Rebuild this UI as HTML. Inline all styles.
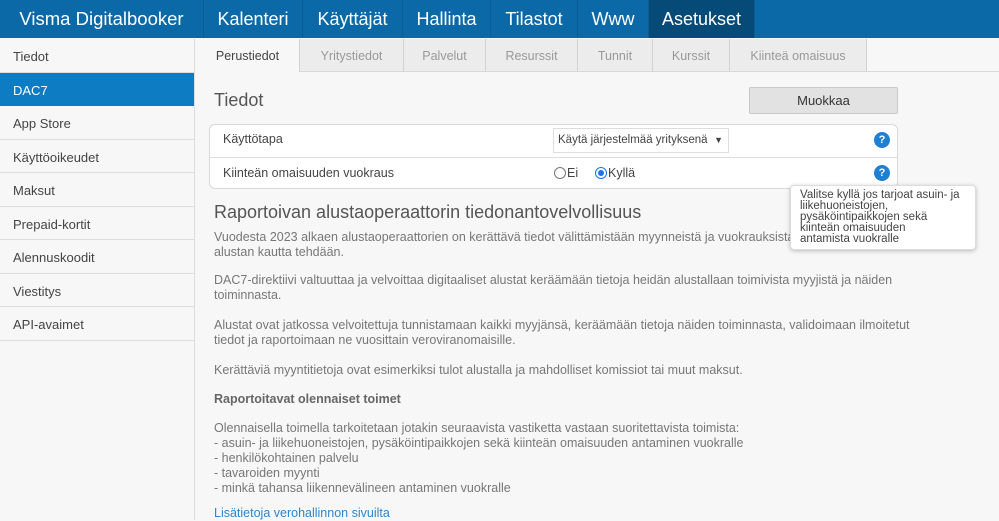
<!DOCTYPE html><html><head><meta charset="utf-8"><style>
*{margin:0;padding:0;box-sizing:border-box}
body{width:999px;height:520px;overflow:hidden;background:#f7f7f7;font-family:"Liberation Sans",sans-serif;position:relative}
.top{position:absolute;left:0;top:0;width:999px;height:38px;background:#0b69a8}
.top div{position:absolute;top:0;height:38px;line-height:38px;color:#fff;font-size:18px;text-align:center;border-right:1px solid #0a5d95}
.side{position:absolute;left:0;top:39px;width:195px;height:481px;background:#f7f7f7;border-right:1px solid #ddd}
.side div{height:33.5px;line-height:35px;padding-left:13px;font-size:13px;color:#444;border-bottom:1px solid #ddd}
.side .act{background:#0e7cc3;color:#fff;border-bottom:none}
.tab{position:absolute;top:39px;height:33px;line-height:34px;text-align:center;font-size:12.5px;color:#999;background:#ececec;border-right:1px solid #d2d2d2;border-bottom:1px solid #d8d8d8}
.tab.a{background:#f7f7f7;color:#444;border-bottom:none}
.t{position:absolute;font-size:12.5px;color:#777;line-height:15px}
.q{position:absolute;width:16px;height:16px;border-radius:50%;background:#1f7fd1;color:#fff;font-weight:bold;font-size:11px;text-align:center;line-height:16px}
</style></head><body>
<div class="top">
<div style="left:0;width:204px;font-size:18.5px">Visma Digitalbooker</div>
<div style="left:204px;width:99px">Kalenteri</div>
<div style="left:303px;width:100px">Käyttäjät</div>
<div style="left:403px;width:88px">Hallinta</div>
<div style="left:491px;width:87px">Tilastot</div>
<div style="left:578px;width:71px">Www</div>
<div style="left:649px;width:106px;background:#064a77">Asetukset</div>
</div>
<div class="side">
<div>Tiedot</div><div class="act">DAC7</div><div>App Store</div><div>Käyttöoikeudet</div><div>Maksut</div><div>Prepaid-kortit</div><div>Alennuskoodit</div><div>Viestitys</div><div>API-avaimet</div>
</div>
<div class="tab a" style="left:196px;width:104px">Perustiedot</div>
<div class="tab" style="left:300px;width:104px">Yritystiedot</div>
<div class="tab" style="left:404px;width:82px">Palvelut</div>
<div class="tab" style="left:486px;width:92px">Resurssit</div>
<div class="tab" style="left:578px;width:75px">Tunnit</div>
<div class="tab" style="left:653px;width:77px">Kurssit</div>
<div class="tab" style="left:730px;width:137px">Kiinteä omaisuus</div>
<div style="position:absolute;left:867px;top:71px;width:132px;border-top:1px solid #d8d8d8"></div>
<div style="position:absolute;left:214px;top:90px;font-size:18px;color:#555">Tiedot</div>
<div style="position:absolute;left:749px;top:87px;width:149px;height:27px;background:#e2e2e2;border:1px solid #c8c8c8;border-radius:2px;text-align:center;line-height:25px;font-size:13px;color:#333">Muokkaa</div>
<div style="position:absolute;left:209px;top:124px;width:689px;height:65px;background:#fff;border:1px solid #d8d8d8;border-radius:6px">
<div style="height:33px;border-bottom:1px solid #ddd"></div></div>
<div class="t" style="left:223px;top:132px;color:#444">Käyttötapa</div>
<div class="t" style="left:223px;top:166px;color:#444">Kiinteän omaisuuden vuokraus</div>
<div style="position:absolute;left:553px;top:128px;width:176px;height:25px;border:1px solid #ddd;background:#fff;font-size:11.5px;color:#444;line-height:23px;padding-left:4px">Käytä järjestelmää yrityksenä <span style="position:absolute;right:5px;top:0;font-size:9px">▼</span></div>
<div style="position:absolute;left:554px;top:167px;width:12px;height:12px;border:1px solid #777;border-radius:50%"></div>
<div class="t" style="left:567px;top:166px;color:#444">Ei</div>
<div style="position:absolute;left:595px;top:167px;width:12px;height:12px;border:1px solid #1a73e8;border-radius:50%;background:#fff"><div style="margin:2px;width:6px;height:6px;border-radius:50%;background:#1a73e8"></div></div>
<div class="t" style="left:608px;top:166px;color:#444">Kyllä</div>
<div class="q" style="left:874px;top:132px">?</div>
<div class="q" style="left:874px;top:165px">?</div>
<div style="position:absolute;left:214px;top:202px;font-size:18px;color:#555">Raportoivan alustaoperaattorin tiedonantovelvollisuus</div>
<div class="t" style="left:214px;top:230px">Vuodesta 2023 alkaen alustaoperaattorien on kerättävä tiedot välittämistään myynneistä ja vuokrauksista, joita<br>alustan kautta tehdään.</div>
<div class="t" style="left:214px;top:273px">DAC7-direktiivi valtuuttaa ja velvoittaa digitaaliset alustat keräämään tietoja heidän alustallaan toimivista myyjistä ja näiden<br>toiminnasta.</div>
<div class="t" style="left:214px;top:318px">Alustat ovat jatkossa velvoitettuja tunnistamaan kaikki myyjänsä, keräämään tietoja näiden toiminnasta, validoimaan ilmoitetut<br>tiedot ja raportoimaan ne vuosittain veroviranomaisille.</div>
<div class="t" style="left:214px;top:363px">Kerättäviä myyntitietoja ovat esimerkiksi tulot alustalla ja mahdolliset komissiot tai muut maksut.</div>
<div class="t" style="left:214px;top:392px;font-weight:bold;color:#666">Raportoitavat olennaiset toimet</div>
<div class="t" style="left:214px;top:421px">Olennaisella toimella tarkoitetaan jotakin seuraavista vastiketta vastaan suoritettavista toimista:<br>- asuin- ja liikehuoneistojen, pysäköintipaikkojen sekä kiinteän omaisuuden antaminen vuokralle<br>- henkilökohtainen palvelu<br>- tavaroiden myynti<br>- minkä tahansa liikennevälineen antaminen vuokralle</div>
<div class="t" style="left:214px;top:506px;color:#2a87d0">Lisätietoja verohallinnon sivuilta</div>
<div style="position:absolute;left:790px;top:185px;width:186px;height:65px;background:#fff;border:1px solid #ddd;border-radius:4px;box-shadow:0 1px 4px rgba(0,0,0,.25);padding:4px 4px 3px 9px;font-size:11.5px;line-height:11px;color:#444;white-space:nowrap">Valitse kyllä jos tarjoat asuin- ja<br>liikehuoneistojen,<br>pysäköintipaikkojen sekä<br>kiinteän omaisuuden<br>antamista vuokralle</div>
</body></html>
